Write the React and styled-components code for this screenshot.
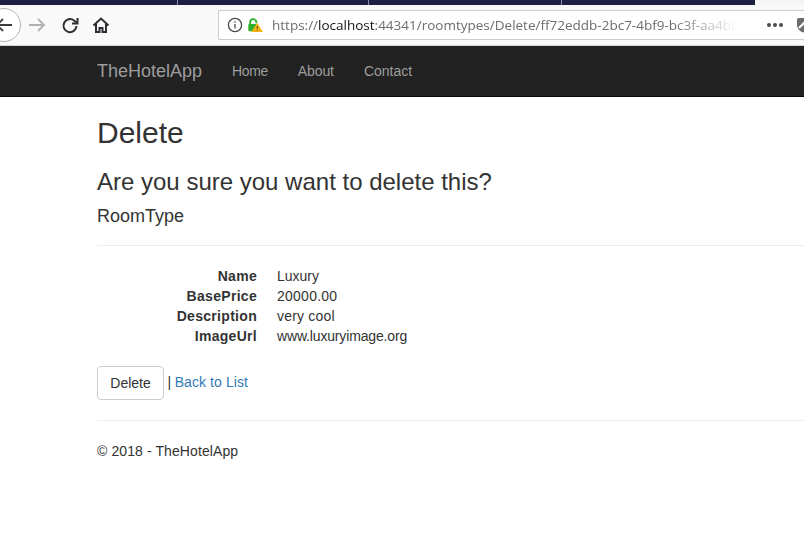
import React from 'react'
import styled, { createGlobalStyle } from 'styled-components'

const GlobalStyle = createGlobalStyle`
  html, body {
    margin: 0;
    background: #fff;
    overflow: hidden;
  }
  body {
    font-family: 'Liberation Sans', Arial, sans-serif;
    font-size: 14px;
    line-height: 20px;
    color: #333;
  }
`

const Page = styled.div`
  width: 804px;
  height: 533px;
  overflow: hidden;
`

const TabStrip = styled.div`
  height: 5px;
  background: #f5f5f5;
  display: flex;
`

const TabFill = styled.div`
  width: 755px;
  background: #1d1f42;
  display: flex;
`

const TabDivider = styled.span`
  width: 1px;
  margin-left: ${(p) => p.$gap}px;
  background: #8a8ca0;
`

const Toolbar = styled.div`
  height: 41px;
  box-sizing: border-box;
  background: #f9f9fa;
  border-bottom: 1px solid #d4d4d6;
  display: flex;
  align-items: center;
  position: relative;
  padding-left: 28px;
`

const BackButton = styled.div`
  position: absolute;
  left: -13px;
  top: 3px;
  width: 34px;
  height: 34px;
  box-sizing: border-box;
  border-radius: 50%;
  background: #fff;
  border: 1px solid #b5b5b7;
  display: flex;
  align-items: center;
  justify-content: center;
`

const NavIcon = styled.svg`
  width: ${(p) => p.$size || 18}px;
  height: ${(p) => p.$size || 18}px;
  margin-right: ${(p) => p.$gap || 0}px;
  flex: none;
`

const UrlBar = styled.div`
  width: 586px;
  height: 30px;
  box-sizing: border-box;
  margin-left: 108px;
  background: #fff;
  border: 1px solid #cdcdcf;
  border-right: 0;
  border-radius: 2px 0 0 2px;
  display: flex;
  align-items: center;
  padding-left: 8px;
  overflow: hidden;
  flex: none;
`

const Url = styled.span`
  margin-left: 9px;
  font-family: 'Open Sans', 'Liberation Sans', sans-serif;
  font-size: 13.5px;
  white-space: nowrap;
  color: #6d6d70;
  width: 466px;
  flex: none;
  overflow: hidden;
  -webkit-mask-image: linear-gradient(to right, #000 86%, transparent 100%);
  mask-image: linear-gradient(to right, #000 86%, transparent 100%);
`

const Host = styled.span`
  color: #111;
`

const MoreDots = styled.div`
  display: flex;
  align-items: center;
  gap: 2px;
  margin-left: 29px;
  flex: none;
`

const Dot = styled.span`
  width: 4px;
  height: 4px;
  border-radius: 50%;
  background: #4a4a4f;
`

const Shield = styled.svg`
  width: 14px;
  height: 16px;
  margin-left: 11px;
  flex: none;
`

const Navbar = styled.nav`
  height: 51px;
  box-sizing: border-box;
  background: #222;
  border-bottom: 1px solid #080808;
  padding-left: 97px;
  display: flex;
  align-items: center;
`

const Brand = styled.a`
  font-size: 18px;
  color: #9d9d9d;
  margin-right: 30px;
`

const NavLink = styled.a`
  color: #9d9d9d;
  letter-spacing: ${(p) => p.$track || 0}px;
  margin-right: 30px;
`

const Container = styled.main`
  padding-left: 97px;
`

const Heading = styled.h2`
  margin: 19px 0 10px;
  font-size: 30px;
  line-height: 33px;
  font-weight: 500;
`

const SubHeading = styled.h3`
  margin: 20px 0 10px;
  font-size: 24px;
  line-height: 26px;
  font-weight: 500;
`

const EntityName = styled.h4`
  margin: 11px 0 10px;
  height: 19px;
  font-size: 18px;
  line-height: 20px;
  font-weight: 500;
`

const Rule = styled.hr`
  border: 0;
  border-top: 1px solid #eee;
  margin: 20px 0;
`

const Details = styled.dl`
  margin: 0 0 20px;
  display: grid;
  grid-template-columns: 160px 1fr;
  column-gap: 20px;
`

const Term = styled.dt`
  font-weight: 700;
  text-align: right;
  letter-spacing: 0.3px;
`

const Value = styled.dd`
  margin: 0;
  letter-spacing: ${(p) => p.$track || 0}px;
`

const Actions = styled.div`
  display: flex;
  align-items: center;
  gap: 4px;
`

const DeleteButton = styled.button`
  font-family: inherit;
  font-size: 14px;
  line-height: 20px;
  width: 67px;
  height: 34px;
  padding: 6px 0;
  color: #333;
  background: #fff;
  border: 1px solid #ccc;
  border-radius: 4px;
`

const BackLink = styled.a`
  color: #337ab7;
  letter-spacing: 0.08px;
  margin-left: -0.6px;
  margin-top: -2px;
`

const Pipe = styled.span`
  margin-left: -0.4px;
  margin-top: -2px;
`

const Footer = styled.p`
  margin: 0 0 10px;
  letter-spacing: 0.1px;
`

export default function App() {
  return (
    <Page>
      <GlobalStyle />
      <TabStrip>
        <TabFill>
          <TabDivider $gap={177} />
          <TabDivider $gap={190} />
          <TabDivider $gap={192} />
        </TabFill>
      </TabStrip>
      <Toolbar>
        <BackButton>
          <NavIcon viewBox="0 0 18 18" fill="none" stroke="#3c3c40" strokeWidth="1.8">
            <path d="M17 9H2M8 3L2 9l6 6" />
          </NavIcon>
        </BackButton>
        <NavIcon viewBox="0 0 18 18" fill="none" stroke="#b1b1b3" strokeWidth="1.8" $gap={15}>
          <path d="M1 9h15M10 3l6 6-6 6" />
        </NavIcon>
        <NavIcon viewBox="0 0 18 18" fill="none" stroke="#2f2f33" strokeWidth="2" $gap={13}>
          <path d="M15.5 10A6.500 6.500 0 1 1 13 4.500L15.500 6.500" />
          <path d="M16.500 2v5.500H11" />
        </NavIcon>
        <NavIcon viewBox="0 0 18 18" fill="none" stroke="#2f2f33" strokeWidth="2">
          <path d="M1.500 9.500L9 2.500l7.500 7" />
          <path d="M4 8v8h3.500v-4h3v4H14V8" />
        </NavIcon>
        <UrlBar>
          <NavIcon viewBox="0 0 16 16" fill="none" stroke="#4a4a4f" strokeWidth="1.3" $size={16} $gap={4}>
            <circle cx="8" cy="8" r="6.6" />
            <path d="M8 7v4.500M8 4.200v1.500" />
          </NavIcon>
          <NavIcon viewBox="0 0 18 18" $size={16}>
            <path d="M3.500 9V6a3.500 3.500 0 0 1 7 0v1" fill="none" stroke="#2ab32a" strokeWidth="2" />
            <rect x="1.5" y="8" width="9" height="8" rx="1.2" fill="#2ab32a" />
            <path d="M11.500 6.500L18 17H5z" fill="#f6b419" />
            <path d="M11.500 10v3.500M11.500 14.500v1" stroke="#5a4000" strokeWidth="1.1" />
          </NavIcon>
          <Url>
            https://<Host>localhost</Host>:44341/roomtypes/Delete/ff72eddb-2bc7-4bf9-bc3f-aa4bc
          </Url>
          <MoreDots>
            <Dot />
            <Dot />
            <Dot />
            <Shield viewBox="0 0 14 16">
              <path d="M1 2.500Q1 1 3 1h8q2 0 2 1.500V8c0 3.500-3 6.500-6 7.500C4 14.500 1 11.500 1 8z" fill="#6b6b70" />
              <path d="M3 11L11 3" stroke="#fff" strokeWidth="2.2" />
            </Shield>
          </MoreDots>
        </UrlBar>
      </Toolbar>
      <Navbar>
        <Brand>TheHotelApp</Brand>
        <NavLink $track={-0.4}>Home</NavLink>
        <NavLink $track={-0.1}>About</NavLink>
        <NavLink>Contact</NavLink>
      </Navbar>
      <Container>
        <Heading>Delete</Heading>
        <SubHeading>Are you sure you want to delete this?</SubHeading>
        <EntityName>RoomType</EntityName>
        <Rule />
        <Details>
          <Term>Name</Term>
          <Value>Luxury</Value>
          <Term>BasePrice</Term>
          <Value $track={0.25}>20000.00</Value>
          <Term>Description</Term>
          <Value $track={0.2}>very cool</Value>
          <Term>ImageUrl</Term>
          <Value $track={-0.16}>www.luxuryimage.org</Value>
        </Details>
        <Actions>
          <DeleteButton>Delete</DeleteButton>
          <Pipe>|</Pipe>
          <BackLink>Back to List</BackLink>
        </Actions>
        <Rule />
        <Footer>© 2018 - TheHotelApp</Footer>
      </Container>
    </Page>
  )
}
